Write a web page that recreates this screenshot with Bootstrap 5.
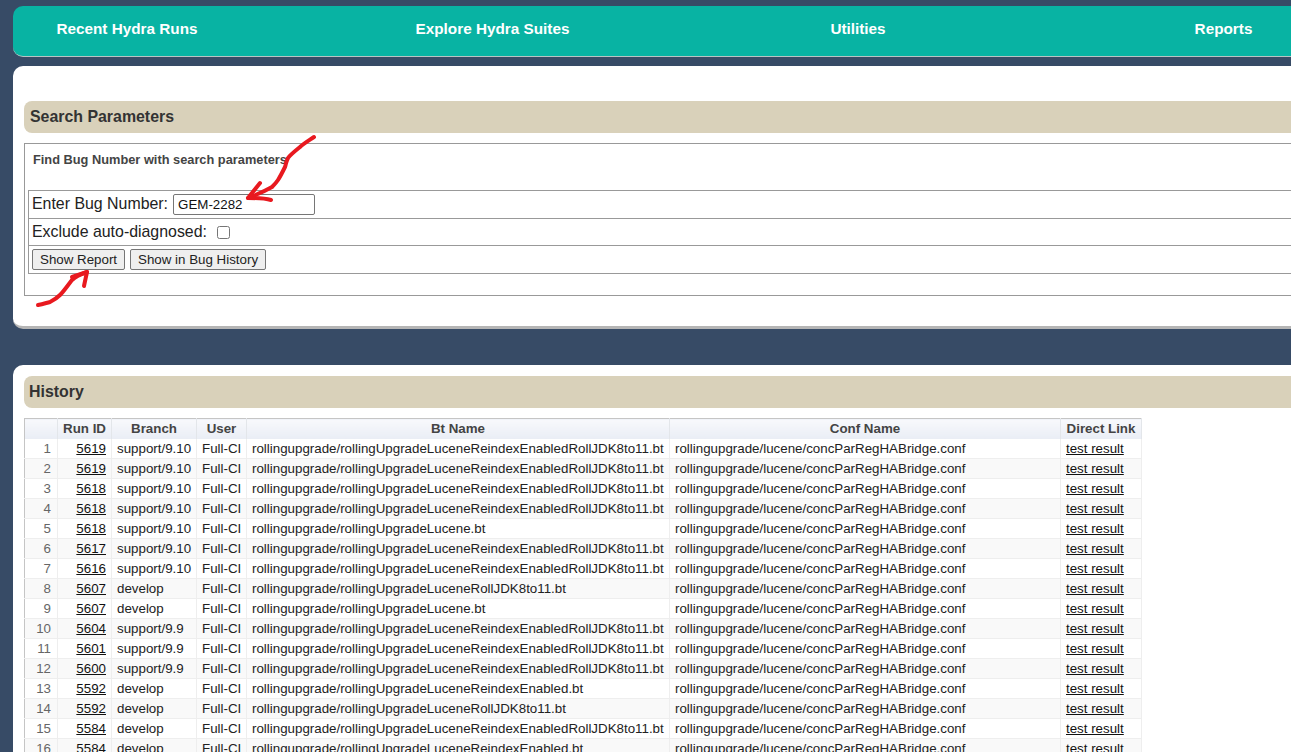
<!DOCTYPE html>
<html lang="en">
  <head>
    <meta charset="UTF-8" />
    <meta name="viewport" content="width=device-width, initial-scale=1.0" />
    <title>Hydra - Bug Report</title>
    <link href="https://cdn.jsdelivr.net/npm/bootstrap@5.3.3/dist/css/bootstrap.min.css" rel="stylesheet" />
    <style>
      html, body {
        height: 100%;
        overflow: hidden;
      }

      body {
        background-color: #374b66;
        font-family: "Liberation Sans", Arial, sans-serif;
        color: #333;
      }

      .page-wrap {
        width: 1500px;
        padding: 6px 0 0 13px;
      }

      .top-menu {
        display: grid;
        grid-template-columns: repeat(4, 228px);
        column-gap: 137.5px;
        height: 51px;
        background-color: #08b3a3;
        border-bottom: 1px solid #b9c4c4;
        border-radius: 10px 0 0 10px;
      }

      .top-menu a {
        color: #fff;
        font-size: 15.3px;
        font-weight: 700;
        line-height: 45px;
        text-align: center;
        text-decoration: none;
      }

      .panel-box {
        position: relative;
        background-color: #fff;
        border-radius: 10px 0 0 10px;
        border-bottom: 3px solid #b5b5b5;
        padding: 0 0 0 11px;
      }

      .panel-search {
        height: 263px;
        margin-top: 9px;
        padding-top: 35px;
      }

      .panel-history {
        height: 500px;
        margin-top: 36px;
        padding-top: 11px;
      }

      .panel-title {
        height: 32px;
        background-color: #d9d1ba;
        border-radius: 8px 0 0 8px;
        font-size: 15.9px;
        font-weight: 700;
        line-height: 31px;
        padding-left: 6px;
        color: #333;
        margin: 0;
      }

      .history-title {
        padding-left: 5px;
      }

      .search-box {
        height: 153px;
        margin-top: 10px;
        border: 1px solid #999;
        border-right: 0;
        padding: 0 0 0 3px;
      }

      .search-caption {
        font-size: 12.8px;
        font-weight: 700;
        padding: 6px 0 0 5px;
        height: 46px;
        color: #444;
      }

      .form-rows {
        border-top: 1px solid #999;
        border-bottom: 1px solid #999;
        border-left: 1px solid #999;
      }

      .form-line {
        display: flex;
        align-items: center;
        font-size: 15.9px;
        color: #222;
        padding-left: 3px;
        border-bottom: 1px solid #999;
      }

      .form-line:last-child {
        border-bottom: 0;
      }

      .line-bug { height: 28px; padding-bottom: 1px; }
      .line-exclude { height: 27px; }
      .line-actions { height: 27px; gap: 5px; }

      .bug-input {
        width: 142px;
        height: 21px;
        margin-left: 5px;
        padding: 0 4px;
        font-size: 13.33px;
        color: #111;
        border: 1px solid #767676;
        border-radius: 2px;
      }

      .exclude-check {
        width: 13px;
        height: 13px;
        margin-left: 10px;
      }

      .plain-btn {
        height: 21px;
        padding: 0 7px;
        font-size: 13.33px;
        color: #222;
        background-color: #efefef;
        border: 1px solid #767676;
        border-radius: 2px;
      }

      .history-grid {
        width: 1118px;
        margin-top: 10px;
        border: 1px solid #c5c5c5;
        border-collapse: collapse;
        table-layout: fixed;
        font-size: 13.33px;
        line-height: 18px;
      }

      .history-grid th {
        height: 20px;
        padding: 0 5px;
        text-align: center;
        font-weight: 700;
        color: #444;
        background: linear-gradient(#f8f9fc, #e9edf5);
        border-right: 1px solid #e3e6ea;
      }

      .history-grid td {
        height: 20px;
        padding: 0 5px;
        color: #222;
        white-space: nowrap;
        border-right: 1px solid #eee;
        border-bottom: 1px solid #eee;
      }

      .history-grid tbody tr:first-child td {
        padding-top: 1px;
      }

      .history-grid tr:nth-child(even) td {
        background-color: #f9f9f9;
      }

      .history-grid td.row-no {
        text-align: right;
        color: #666;
        padding-right: 6px;
      }

      .history-grid td.run-id {
        text-align: right;
      }

      .history-grid a {
        color: #111;
      }

      .note-mark {
        position: absolute;
        fill: none;
        stroke: #e8191f;
        stroke-width: 4;
        stroke-linecap: round;
        stroke-linejoin: round;
      }

      .mark-input {
        left: 232px;
        top: 64px;
        width: 80px;
        height: 80px;
      }

      .mark-button {
        left: 22px;
        top: 200px;
        width: 60px;
        height: 45px;
      }
    </style>
  </head>
  <body>
    <div class="page-wrap">
      <!-- Menu -->
      <nav class="top-menu">
        <a href="#">Recent Hydra Runs</a>
        <a href="#">Explore Hydra Suites</a>
        <a href="#">Utilities</a>
        <a href="#">Reports</a>
      </nav>

      <!-- Search Parameters -->
      <div class="panel-box panel-search">
        <h2 class="panel-title">Search Parameters</h2>
        <div class="search-box">
          <div class="search-caption">Find Bug Number with search parameters</div>
          <div class="form-rows">
            <div class="form-line line-bug">
              <label for="bug-number">Enter Bug Number:</label>
              <input id="bug-number" class="bug-input" type="text" value="GEM-2282" />
            </div>
            <div class="form-line line-exclude">
              <label for="exclude-auto">Exclude auto-diagnosed:</label>
              <input id="exclude-auto" class="exclude-check" type="checkbox" />
            </div>
            <div class="form-line line-actions">
              <button class="plain-btn" type="button">Show Report</button>
              <button class="plain-btn" type="button">Show in Bug History</button>
            </div>
          </div>
        </div>
        <!-- Red arrows drawn over the form -->
        <svg class="note-mark mark-input" viewBox="0 0 80 80">
          <path d="M69 7C63 11 58 14 55 17C50 21 45 25 43 28C41 32 41 34 40 37C37 43 35 47 33 50C31 53 29 55 27 57C20 61 11 65 3 68" />
          <path d="M15 53L3 68C11 68 19 68 26 70" />
        </svg>
        <svg class="note-mark mark-button" viewBox="0 0 60 45">
          <path d="M3 39C8 38 11 37 15 36C19 34 22 32 25 29C29 25 33 19 37 14C41 10 46 8 52 6" />
          <path d="M37 11L52 6C51 11 50 15 49 20" />
        </svg>
      </div>

      <!-- History -->
      <div class="panel-box panel-history">
        <h2 class="panel-title history-title">History</h2>
        <table class="history-grid">
          <colgroup>
            <col style="width: 33px" />
            <col style="width: 54px" />
            <col style="width: 85px" />
            <col style="width: 50px" />
            <col style="width: 423px" />
            <col style="width: 391px" />
            <col style="width: 81px" />
          </colgroup>
          <thead>
            <tr>
              <th></th>
              <th>Run ID</th>
              <th>Branch</th>
              <th>User</th>
              <th>Bt Name</th>
              <th>Conf Name</th>
              <th>Direct Link</th>
            </tr>
          </thead>
          <tbody id="history-rows"></tbody>
        </table>
      </div>
    </div>

    <script>
      const REINDEX_ROLL = "rollingUpgradeLuceneReindexEnabledRollJDK8to11.bt";
      const PLAIN = "rollingUpgradeLucene.bt";
      const ROLL = "rollingUpgradeLuceneRollJDK8to11.bt";
      const REINDEX = "rollingUpgradeLuceneReindexEnabled.bt";

      const runs = [
        [5619, "support/9.10", REINDEX_ROLL],
        [5619, "support/9.10", REINDEX_ROLL],
        [5618, "support/9.10", REINDEX_ROLL],
        [5618, "support/9.10", REINDEX_ROLL],
        [5618, "support/9.10", PLAIN],
        [5617, "support/9.10", REINDEX_ROLL],
        [5616, "support/9.10", REINDEX_ROLL],
        [5607, "develop", ROLL],
        [5607, "develop", PLAIN],
        [5604, "support/9.9", REINDEX_ROLL],
        [5601, "support/9.9", REINDEX_ROLL],
        [5600, "support/9.9", REINDEX_ROLL],
        [5592, "develop", REINDEX],
        [5592, "develop", ROLL],
        [5584, "develop", REINDEX_ROLL],
        [5584, "develop", REINDEX],
      ];

      document.getElementById("history-rows").innerHTML = runs
        .map(
          (run, index) => `
          <tr>
            <td class="row-no">${index + 1}</td>
            <td class="run-id"><a href="#">${run[0]}</a></td>
            <td>${run[1]}</td>
            <td>Full-CI</td>
            <td>rollingupgrade/${run[2]}</td>
            <td>rollingupgrade/lucene/concParRegHABridge.conf</td>
            <td><a href="#">test result</a></td>
          </tr>`
        )
        .join("");
    </script>

    <script src="https://cdn.jsdelivr.net/npm/bootstrap@5.3.3/dist/js/bootstrap.bundle.min.js"></script>
  </body>
</html>
